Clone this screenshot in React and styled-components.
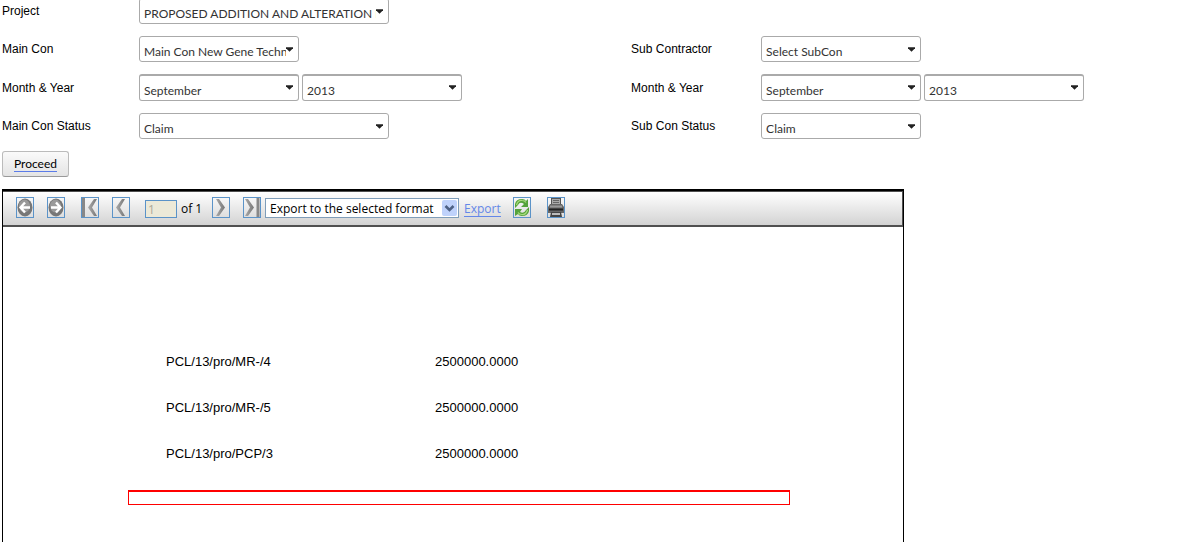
import React from "react";
import styled, { createGlobalStyle } from "styled-components";

const sans = `"Liberation Sans", Arial, sans-serif`;
const humanist = `Lato, "Open Sans", sans-serif`;
const toolbarFont = `"Open Sans", "Noto Sans", sans-serif`;

const GlobalStyle = createGlobalStyle`
  *, *::before, *::after { box-sizing: border-box; }
  body { margin: 0; background: #fff; color: #000; font-family: ${sans}; font-size: 12px; }
`;

const Page = styled.main`
  min-height: 100vh;
  padding-left: 2px;
  display: flex;
  flex-direction: column;
`;

const Form = styled.form`
  margin-top: -2px;
  display: flex;
  flex-direction: column;
  align-items: flex-start;
  gap: 12px;
`;

const FormRow = styled.div`
  width: 100%;
  display: grid;
  grid-template-columns: 53fr 47fr;
`;

const Field = styled.div`
  display: flex;
  align-items: center;
  gap: 3px;
`;

const Label = styled.label`
  flex: none;
  width: ${(p) => (p.$side === "sub" ? 127 : 134)}px;
  line-height: 26px;
  white-space: nowrap;
`;

const SelectBox = styled.span`
  position: relative;
  flex: none;
  width: ${(p) => (p.$wide ? 250 : 160)}px;
`;

const Select = styled.select`
  appearance: none;
  display: block;
  width: 100%;
  height: ${(p) => (p.$heavy ? 27 : 26)}px;
  margin: 0;
  padding: 4px 12px 0 4px;
  border: 1px solid #aaa;
  border-top-width: ${(p) => (p.$heavy ? 2 : 1)}px;
  border-radius: 3px;
  background: #fff;
  color: #333;
  font: 12px ${humanist};
`;

const Caret = styled.svg`
  position: absolute;
  top: 11px;
  right: 6px;
  pointer-events: none;
`;

const Proceed = styled.button`
  width: 67px;
  height: 26px;
  padding: 0;
  border: 1px solid #bbb;
  border-bottom-color: #999;
  border-radius: 3px;
  background: linear-gradient(#fafafa, #e4e4e4);
  color: #000;
  font: 12px/14px ${humanist};
`;

const ProceedText = styled.span`
  border-bottom: 1px solid #5b7be8;
`;

const Viewer = styled.section`
  flex: 1;
  width: 100%;
  max-width: 902px;
  margin-top: 12px;
  border: 1px solid #000;
  border-top-width: 2px;
  border-bottom: 0;
`;

const Toolbar = styled.div`
  height: 36px;
  padding: 0 13px 2px;
  border: 1px solid #505050;
  border-bottom-width: 2px;
  border-left: 0;
  background: linear-gradient(#fff, #d3d3d3);
  display: flex;
  align-items: center;
`;

const Group = styled.div`
  display: flex;
  align-items: center;
  gap: ${(p) => p.$gap}px;
  margin-right: ${(p) => p.$after || 0}px;
`;

const IconButton = styled.button`
  flex: none;
  width: 18px;
  height: 21px;
  padding: 0;
  border: 1px solid #5b93c8;
  background: transparent;
  svg { display: block; width: 16px; height: 19px; }
`;

const PageInput = styled.input`
  width: 32px;
  height: 18px;
  margin: 2px 0 0;
  padding: 1px 2px 0;
  border: 1px solid #5b93c8;
  border-radius: 0;
  background: #ece9d8;
  color: #aca899;
  font: 12px ${toolbarFont};
`;

const PageCount = styled.span`
  width: 22px;
  margin-top: 3px;
  white-space: nowrap;
  font: 12px/18px ${toolbarFont};
`;

const FormatBox = styled.span`
  position: relative;
  width: 194px;
`;

const FormatSelect = styled.select`
  appearance: none;
  display: block;
  width: 100%;
  height: 20px;
  margin: 0;
  padding: 1px 18px 0 4px;
  border: 1px solid #7f9db9;
  border-radius: 0;
  background: #fff;
  color: #000;
  font: 12px ${toolbarFont};
`;

const FormatArrow = styled.svg`
  position: absolute;
  top: 2px;
  right: 2px;
  pointer-events: none;
`;

const ExportLink = styled.a`
  width: 37px;
  margin-top: 3px;
  color: #6487e8;
  border-bottom: 1px solid #6487e8;
  text-decoration: none;
  font: 12px/14px ${toolbarFont};
`;

const Report = styled.div`
  padding: 111px 113px 0 125px;
`;

const ReportTable = styled.table`
  width: 100%;
  table-layout: fixed;
  border-collapse: collapse;
  font-size: 13px;
`;

const Cell = styled.td`
  width: ${(p) => (p.$first ? "307px" : "auto")};
  height: 46px;
  padding: 0 0 0 ${(p) => (p.$first ? 38 : 0)}px;
  vertical-align: middle;
`;

const Highlight = styled.div`
  height: 15px;
  margin-top: 14px;
  border: 1px solid #f00;
  border-top-width: 2px;
`;

function Picker({ value, label, id, wide, heavy }) {
  return (
    <SelectBox $wide={wide}>
      <Select id={id} aria-label={label} $heavy={heavy} defaultValue={value}>
        <option>{value}</option>
      </Select>
      <Caret width="7" height="5" viewBox="0 0 8 5" aria-hidden="true">
        <path d="M0 0h8v1L4 5 0 1z" fill="#222" />
      </Caret>
    </SelectBox>
  );
}

function MonthYear({ side }) {
  return (
    <Field>
      <Label $side={side} htmlFor={`${side}-month`}>Month &amp; Year</Label>
      <Picker id={`${side}-month`} value="September" heavy />
      <Picker label="Year" value="2013" heavy />
    </Field>
  );
}

function ArrowDisc({ back }) {
  return (
    <svg viewBox="0 0 16 19" aria-hidden="true">
      <ellipse cx="8" cy="9.5" rx="7.5" ry="9" fill="#777" />
      <ellipse cx="7.5" cy="8" rx="5.5" ry="6.5" fill="#999" />
      <path
        d={back ? "M8 4.5 3.5 9.5 8 14.5M4 9.5h9" : "M8 4.5l4.5 5L8 14.5M12 9.5H3"}
        fill="none" stroke="#fff" strokeWidth="2.4"
      />
    </svg>
  );
}

function Chevron({ right, bar }) {
  return (
    <svg viewBox="0 0 16 19" aria-hidden="true">
      <defs>
        <linearGradient id="steel" x1="0" x2="1">
          <stop offset="0" stopColor="#aaa" />
          <stop offset="1" stopColor="#777" />
        </linearGradient>
      </defs>
      {bar && <path d={right ? "M12.5 0h3v19h-3z" : "M0 0h3v19H0z"} fill="#888" />}
      {right ? (
        <path d={bar ? "M1 1h3l6 8.5L4 18H1l5-8.5z" : "M3 1h3l6 8.5L6 18H3l5-8.5z"} fill="url(#steel)" />
      ) : (
        <path d={bar ? "M15 1h-3L6 9.5l6 8.5h3l-5-8.5z" : "M12 1H9L3 9.5 9 18h3L7 9.5z"} fill="url(#steel)" />
      )}
    </svg>
  );
}

function Refresh() {
  return (
    <svg viewBox="0 0 16 19" aria-hidden="true">
      <path d="M1 10V6Q2 1 8 1q3 0 4 2l2-2v8H7l3-3Q6 3 4 7z" fill="#55a33b" />
      <path d="M15 9v4q-1 5-7 5-3 0-4-2l-3 2v-7h7l-2 3q4 2 6-2z" fill="#55a33b" />
      <path d="M2.5 7Q4 2 8 2.500q3 0 4 2M13.5 12Q12 17 8 16.500q-3 0-4-2" fill="none" stroke="#a8db7c" strokeWidth="1.2" />
    </svg>
  );
}

function Printer() {
  return (
    <svg viewBox="0 0 16 19" aria-hidden="true">
      <path d="M3 0h10v7H3z" fill="#555" />
      <path d="M4 1h8v5H4z" fill="#aaa" />
      <path d="M5 2.5h6M5 4.5h6" stroke="#666" />
      <path d="M2 6h12l2 3v6H0V9z" fill="#666" />
      <path d="M2 8.5h12" stroke="#999" strokeWidth="2" />
      <path d="M1 11.5h14" stroke="#222" strokeWidth="2" />
      <path d="M3 14h10l1 5H2z" fill="#444" />
      <path d="M4 15h8v2H4z" fill="#bbb" />
    </svg>
  );
}

const rows = [
  ["PCL/13/pro/MR-/4", "2500000.0000"],
  ["PCL/13/pro/MR-/5", "2500000.0000"],
  ["PCL/13/pro/PCP/3", "2500000.0000"],
];

export default function App() {
  return (
    <Page>
      <GlobalStyle />
      <Form onSubmit={(e) => e.preventDefault()}>
        <FormRow>
          <Field>
            <Label htmlFor="project">Project</Label>
            <Picker id="project" value="PROPOSED ADDITION AND ALTERATION IN" wide />
          </Field>
        </FormRow>
        <FormRow>
          <Field>
            <Label htmlFor="main-con">Main Con</Label>
            <Picker id="main-con" value="Main Con New Gene Technology" />
          </Field>
          <Field>
            <Label $side="sub" htmlFor="sub-con">Sub Contractor</Label>
            <Picker id="sub-con" value="Select SubCon" />
          </Field>
        </FormRow>
        <FormRow>
          <MonthYear side="main" />
          <MonthYear side="sub" />
        </FormRow>
        <FormRow>
          <Field>
            <Label htmlFor="main-status">Main Con Status</Label>
            <Picker id="main-status" value="Claim" wide />
          </Field>
          <Field>
            <Label $side="sub" htmlFor="sub-status">Sub Con Status</Label>
            <Picker id="sub-status" value="Claim" />
          </Field>
        </FormRow>
        <Proceed type="submit"><ProceedText>Proceed</ProceedText></Proceed>
      </Form>

      <Viewer aria-label="Report viewer">
        <Toolbar>
          <Group $gap={13} $after={16}>
            <IconButton aria-label="Back"><ArrowDisc back /></IconButton>
            <IconButton aria-label="Forward"><ArrowDisc /></IconButton>
          </Group>
          <Group $gap={13} $after={15}>
            <IconButton aria-label="First page"><Chevron bar /></IconButton>
            <IconButton aria-label="Previous page"><Chevron /></IconButton>
          </Group>
          <Group $gap={4} $after={9}>
            <PageInput aria-label="Page number" defaultValue="1" disabled />
            <PageCount>of 1</PageCount>
          </Group>
          <Group $gap={13} $after={4}>
            <IconButton aria-label="Next page"><Chevron right /></IconButton>
            <IconButton aria-label="Last page"><Chevron right bar /></IconButton>
          </Group>
          <Group $gap={5} $after={12}>
            <FormatBox>
              <FormatSelect aria-label="Export format">
                <option>Export to the selected format</option>
              </FormatSelect>
              <FormatArrow width="15" height="16" viewBox="0 0 15 16" aria-hidden="true">
                <rect width="15" height="16" rx="2" fill="#bfd2fb" />
                <path d="M3.5 6l4 4 4-4" fill="none" stroke="#4d6185" strokeWidth="2.6" />
              </FormatArrow>
            </FormatBox>
            <ExportLink href="#export">Export</ExportLink>
          </Group>
          <Group $gap={16}>
            <IconButton aria-label="Refresh"><Refresh /></IconButton>
            <IconButton aria-label="Print"><Printer /></IconButton>
          </Group>
        </Toolbar>
        <Report>
          <ReportTable>
            <tbody>
              {rows.map(([code, amount]) => (
                <tr key={code}>
                  <Cell $first>{code}</Cell>
                  <Cell>{amount}</Cell>
                </tr>
              ))}
            </tbody>
          </ReportTable>
          <Highlight />
        </Report>
      </Viewer>
    </Page>
  );
}
